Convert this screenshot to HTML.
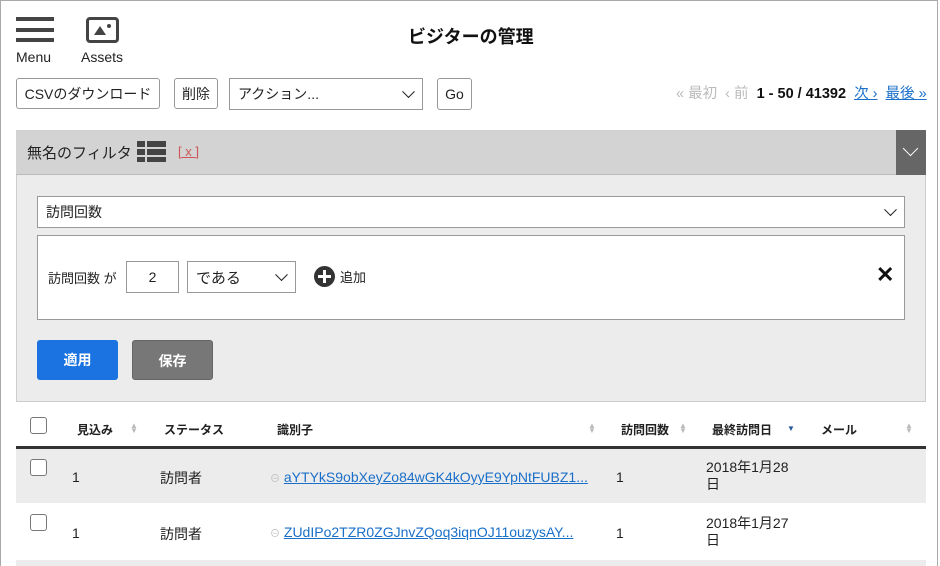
<!DOCTYPE html>
<html><head><meta charset="utf-8"><style>
*{box-sizing:border-box;margin:0;padding:0}
body{width:940px;height:566px;background:#fff;position:relative;overflow:hidden;font-family:"Liberation Sans","Noto Sans CJK JP",sans-serif;color:#222;font-size:14px}
.a{position:absolute}
.frame{left:0;top:0;width:938px;height:566px;border:1px solid #aaa;border-bottom:none}
.btn{position:absolute;border:1px solid #999;border-radius:3px;background:#fff;font-size:14px;display:flex;align-items:center;justify-content:center}
.sel{position:absolute;border:1px solid #999;background:#fff;font-size:14px;display:flex;align-items:center;padding-left:8px}
.chev{position:absolute;right:9px;top:50%;width:9px;height:9px;border-right:1.7px solid #222;border-bottom:1.7px solid #222;transform:translateY(-75%) rotate(45deg)}
.th{position:absolute;top:421px;font-size:12px;font-weight:bold}
.sort{position:absolute;top:423px;font-size:8px;color:#bbb;line-height:5px}
.cb{position:absolute;width:17px;height:17px;border:1px solid #777;border-radius:3px;background:#fff}
a{color:#1a6fc9}
</style></head><body>
<div class="a frame"></div>
<div class="a" style="left:16px;top:17px;width:38px;height:4px;background:#444"></div>
<div class="a" style="left:16px;top:28px;width:38px;height:4px;background:#444"></div>
<div class="a" style="left:16px;top:38px;width:38px;height:4px;background:#444"></div>
<div class="a" style="left:16px;top:49px;font-size:14px">Menu</div>
<div class="a" style="left:86px;top:17px;width:33px;height:26px;border:3px solid #444;border-radius:4px"></div>
<div class="a" style="left:94px;top:26px;width:0;height:0;border-left:6px solid transparent;border-right:6px solid transparent;border-bottom:9px solid #444"></div>
<div class="a" style="left:107px;top:24px;width:4px;height:4px;background:#444;border-radius:2px"></div>
<div class="a" style="left:81px;top:49px;font-size:14px">Assets</div>
<div class="a" style="left:408px;top:23px;font-size:18px;font-weight:bold;color:#111">ビジターの管理</div>
<div class="btn" style="left:16px;top:78px;width:144px;height:31px">CSVのダウンロード</div>
<div class="btn" style="left:174px;top:78px;width:44px;height:31px">削除</div>
<div class="sel" style="left:229px;top:78px;width:194px;height:32px">アクション...<span class="chev"></span></div>
<div class="btn" style="left:437px;top:78px;width:35px;height:32px">Go</div>
<div class="a" style="left:676px;top:82px;font-size:14.5px;color:#bbb;white-space:nowrap">« 最初 &nbsp;‹ 前 <b style="color:#111">&nbsp;1 - 50 / 41392</b> &nbsp;<a href="#">次 ›</a>&nbsp; <a href="#">最後 »</a></div>
<div class="a" style="left:16px;top:130px;width:910px;height:272px;background:#ececec;border:1px solid #ccc"></div>
<div class="a" style="left:16px;top:130px;width:910px;height:45px;background:#d3d3d3;border-bottom:1px solid #bbb"></div>
<div class="a" style="left:896px;top:130px;width:30px;height:45px;background:#666"></div>
<div class="a" style="left:905px;top:143px;width:11px;height:11px;border-right:1.5px solid #fff;border-bottom:1.5px solid #fff;transform:rotate(45deg)"></div>
<div class="a" style="left:27px;top:142px;font-size:15px">無名のフィルタ</div>
<div class="a" style="left:137px;top:141px;width:8px;height:6px;background:#444"></div><div class="a" style="left:147px;top:141px;width:19px;height:6px;background:#444"></div>
<div class="a" style="left:137px;top:149px;width:8px;height:6px;background:#444"></div><div class="a" style="left:147px;top:149px;width:19px;height:6px;background:#444"></div>
<div class="a" style="left:137px;top:157px;width:8px;height:5px;background:#444"></div><div class="a" style="left:147px;top:157px;width:19px;height:5px;background:#444"></div>
<div class="a" style="left:178px;top:144px;font-size:13px;color:#c55;text-decoration:underline">[ x ]</div>
<div class="sel" style="left:37px;top:196px;width:868px;height:32px">訪問回数<span class="chev"></span></div>
<div class="a" style="left:37px;top:235px;width:868px;height:85px;background:#fff;border:1px solid #999"></div>
<div class="a" style="left:48px;top:268px;font-size:13px">訪問回数 が</div>
<div class="a" style="left:126px;top:261px;width:53px;height:32px;border:1px solid #999;background:#fff;text-align:center;line-height:30px">2</div>
<div class="sel" style="left:187px;top:261px;width:109px;height:32px;font-size:15px">である<span class="chev"></span></div>
<div class="a" style="left:314px;top:266px;width:21px;height:21px;border-radius:50%;background:#333"></div>
<div class="a" style="left:318px;top:275px;width:13px;height:3px;background:#fff"></div>
<div class="a" style="left:323px;top:270px;width:3px;height:13px;background:#fff"></div>
<div class="a" style="left:340px;top:267px;font-size:13px">追加</div>
<div class="a" style="left:876px;top:262px;font-size:22px;font-weight:bold;color:#111">✕</div>
<div class="a" style="left:37px;top:340px;width:81px;height:40px;background:#1a73e0;border-radius:3px;color:#fff;font-weight:bold;text-align:center;line-height:40px">適用</div>
<div class="a" style="left:132px;top:340px;width:81px;height:40px;background:#777;border-radius:3px;color:#fff;font-weight:bold;text-align:center;line-height:40px;border:1px solid #666">保存</div>
<div class="cb" style="left:30px;top:417px"></div>
<div class="th" style="left:77px">見込み</div><div class="sort" style="left:130px">▲<br>▼</div>
<div class="th" style="left:164px">ステータス</div>
<div class="th" style="left:277px">識別子</div><div class="sort" style="left:588px">▲<br>▼</div>
<div class="th" style="left:621px">訪問回数</div><div class="sort" style="left:679px">▲<br>▼</div>
<div class="th" style="left:712px">最終訪問日</div><div class="a" style="left:787px;top:424px;font-size:8px;color:#2a5a9a">▼</div>
<div class="th" style="left:821px">メール</div><div class="sort" style="left:905px">▲<br>▼</div>
<div class="a" style="left:16px;top:446px;width:910px;height:3px;background:#333"></div>
<div class="a" style="left:16px;top:449px;width:910px;height:54px;background:#ececec"></div>
<div class="a" style="left:16px;top:560px;width:910px;height:6px;background:#ececec"></div>
<div class="cb" style="left:30px;top:459px"></div>
<div class="a" style="left:72px;top:469px">1</div>
<div class="a" style="left:160px;top:468px">訪問者</div>
<div class="a" style="left:270px;top:469px"><span style="color:#bbb;font-size:10px">⊖</span> <a href="#">aYTYkS9obXeyZo84wGK4kOyyE9YpNtFUBZ1...</a></div>
<div class="a" style="left:616px;top:469px">1</div>
<div class="a" style="left:706px;top:459px;line-height:17px">2018年1月28<br>日</div>
<div class="cb" style="left:30px;top:514px"></div>
<div class="a" style="left:72px;top:525px">1</div>
<div class="a" style="left:160px;top:524px">訪問者</div>
<div class="a" style="left:270px;top:524px"><span style="color:#bbb;font-size:10px">⊖</span> <a href="#">ZUdIPo2TZR0ZGJnvZQoq3iqnOJ11ouzysAY...</a></div>
<div class="a" style="left:616px;top:525px">1</div>
<div class="a" style="left:706px;top:515px;line-height:17px">2018年1月27<br>日</div>
</body></html>
